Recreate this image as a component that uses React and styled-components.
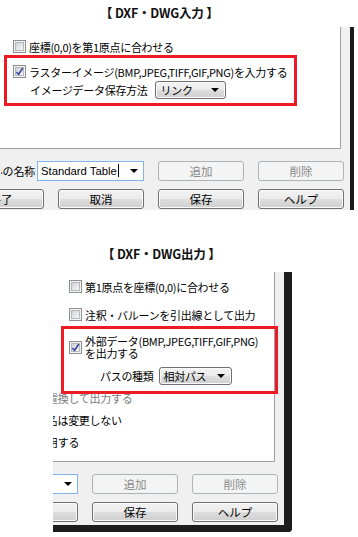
import React from "react";
import styled, { createGlobalStyle, css } from "styled-components";

const Global = createGlobalStyle`
  html, body { margin: 0; padding: 0; background: #ffffff; }
  body {
    font-family: "Noto Sans CJK JP", "Noto Sans", sans-serif;
    font-size: 11px;
    color: #000;
  }
  * { box-sizing: border-box; }
`;

const Page = styled.div`
  width: 358px;
  height: 537px;
  overflow: hidden;
  background: #fff;
  display: flex;
  flex-direction: column;
`;

const Title = styled.div`
  height: ${(p) => p.$h}px;
  padding-left: ${(p) => p.$x}px;
  padding-top: ${(p) => p.$top}px;
  font-weight: 700;
  font-size: 12.5px;
  line-height: 12px;
  letter-spacing: -0.2px;
  color: #111;
  white-space: nowrap;
  flex-shrink: 0;
`;

const Crop = styled.div`
  margin-left: ${(p) => p.$left}px;
  width: ${(p) => p.$w}px;
  overflow: hidden;
  flex-shrink: 0;
`;

const Window = styled.div`
  display: flex;
  background: #f0f0f0;
  border-right: ${(p) => p.$frame}px solid #1c1c1c;
  border-bottom: ${(p) => p.$bottom}px solid #1c1c1c;
  border-bottom-right-radius: ${(p) => (p.$bottom ? 4 : 0)}px;
`;

const Dialog = styled.div`
  flex: 1;
  min-width: 0;
  display: flex;
  flex-direction: column;
`;

const ListPanel = styled.div`
  height: ${(p) => p.$h}px;
  margin-right: 9px;
  background: #fff;
  border-right: 1px solid #a0a0a0;
  border-bottom: 1px solid #a0a0a0;
  padding-left: ${(p) => p.$pad}px;
  padding-top: ${(p) => p.$top}px;
  display: flex;
  flex-direction: column;
  align-items: flex-start;
`;

const CheckRow = styled.div`
  display: flex;
  align-items: center;
  gap: 3px;
  margin-left: ${(p) => p.$ml || 0}px;
  margin-top: ${(p) => p.$mt || 0}px;
  white-space: nowrap;
  letter-spacing: -0.3px;
`;

const Label = styled.span`
  line-height: 12px;
  white-space: nowrap;
`;

const BoxOuter = styled.span`
  width: 13px;
  height: 13px;
  flex-shrink: 0;
  border: 1px solid #8e8f8f;
  background: #f4f4f4;
  padding: 1px;
  display: flex;
`;

const BoxInner = styled.span`
  flex: 1;
  border: 1px solid #b4b8bd;
  background: linear-gradient(135deg, #cfd2d6 0%, #e6e7e9 55%, #f7f7f7 100%);
  position: relative;
  display: flex;
  align-items: center;
  justify-content: center;
`;

const Check = ({ on }) => (
  <BoxOuter>
    <BoxInner>
      {on && (
        <svg width="9" height="9" viewBox="0 0 9 9" style={{ position: "absolute", left: -1, top: -1 }}>
          <path d="M1.5 5 L3.5 7.5 L7.8 1" fill="none" stroke="#3a4a9c" strokeWidth="1.6" strokeLinejoin="round" />
        </svg>
      )}
    </BoxInner>
  </BoxOuter>
);

const RedBox = styled.div`
  border: 3px solid #ed1c24;
  width: ${(p) => p.$w}px;
  height: ${(p) => p.$h}px;
  margin-top: ${(p) => p.$mt}px;
  padding: ${(p) => p.$pad};
  display: flex;
  flex-direction: column;
  align-items: flex-start;
  flex-shrink: 0;
`;

const SubRow = styled.div`
  display: flex;
  align-items: center;
  gap: ${(p) => p.$gap}px;
  margin-left: ${(p) => p.$ml}px;
  margin-top: ${(p) => p.$mt}px;
  letter-spacing: -0.3px;
  white-space: nowrap;
`;

const Triangle = styled.span`
  width: 0;
  height: 0;
  border-left: 4px solid transparent;
  border-right: 4px solid transparent;
  border-top: 4px solid #000;
  flex-shrink: 0;
`;

const Select = styled.div`
  width: ${(p) => p.$w}px;
  height: 18px;
  border: 1px solid #707070;
  border-radius: 3px;
  background: linear-gradient(#f3f3f3 0%, #ebebeb 50%, #dddddd 51%, #d0d0d0 100%);
  box-shadow: inset 0 0 0 1px #fafafa;
  display: flex;
  align-items: center;
  justify-content: space-between;
  padding: 0 6px 0 4px;
  line-height: 12px;
`;

const Controls = styled.div`
  display: flex;
  flex-direction: column;
  gap: 8px;
  padding: 12px 6px ${(p) => p.$pb}px 0;
  overflow: hidden;
`;

const Row = styled.div`
  display: flex;
  justify-content: flex-end;
  align-items: center;
  gap: 14px;
  height: 20px;
`;

const Group = styled.div`
  display: flex;
  align-items: center;
  gap: 2px;
  flex-shrink: 0;
`;

const FieldLabel = styled.span`
  width: ${(p) => p.$w}px;
  display: flex;
  justify-content: flex-end;
  overflow: hidden;
  white-space: nowrap;
  letter-spacing: -0.2px;
  line-height: 12px;
`;

const Combo = styled.div`
  width: 107px;
  height: 20px;
  flex-shrink: 0;
  background: #fff;
  border: 1px solid #7eb4ea;
  display: flex;
  align-items: center;
  justify-content: space-between;
  padding: 0 5px 0 3px;
`;

const ComboText = styled.span`
  font-family: "Liberation Sans", Arial, sans-serif;
  font-size: 11.3px;
  line-height: 14px;
  white-space: nowrap;
  &::after {
    content: "";
    display: inline-block;
    width: 1px;
    height: 13px;
    background: #000;
    vertical-align: -2px;
    margin-left: 1px;
  }
`;

const Button = styled.div`
  width: 86px;
  height: 20px;
  flex-shrink: 0;
  border-radius: 3px;
  display: flex;
  align-items: center;
  justify-content: center;
  font-size: 11.5px;
  line-height: 12px;
  ${(p) =>
    p.$disabled
      ? css`
          border: 1px solid #adb2b5;
          background: #f4f4f4;
          color: #8a8a8a;
        `
      : css`
          border: 1px solid #707070;
          background: linear-gradient(#f2f2f2 0%, #ebebeb 50%, #dddddd 51%, #cfcfcf 100%);
          box-shadow: inset 0 0 0 1px #fbfbfb;
          color: #000;
        `}
`;

const ListLine = styled.div`
  height: 22px;
  line-height: 22px;
  margin-left: ${(p) => p.$ml}px;
  margin-top: ${(p) => p.$mt || 0}px;
  white-space: nowrap;
  letter-spacing: -0.3px;
  color: ${(p) => (p.$dim ? "#7a7a7a" : "#000")};
`;

export default function App() {
  return (
    <>
      <Global />
      <Page>
        <Title $h={27} $x={100} $top={7}>【 DXF・DWG入力 】</Title>
        <Crop $left={0} $w={354}>
          <Window $frame={4} $bottom={0}>
            <Dialog>
              <ListPanel $h={122} $pad={4} $top={13}>
                <CheckRow $ml={9}>
                  <Check />
                  <Label>座標(0,0)を第1原点に合わせる</Label>
                </CheckRow>
                <RedBox $w={293} $h={51} $mt={2} $pad="7px 0 0 6px">
                  <CheckRow>
                    <Check on />
                    <Label>ラスターイメージ(BMP,JPEG,TIFF,GIF,PNG)を入力する</Label>
                  </CheckRow>
                  <SubRow $ml={17} $mt={3} $gap={8}>
                    <Label>イメージデータ保存方法</Label>
                    <Select $w={71}>
                      <Label>リンク</Label>
                      <Triangle />
                    </Select>
                  </SubRow>
                </RedBox>
              </ListPanel>
              <Controls $pb={1}>
                <Row>
                  <Group>
                    <FieldLabel $w={34}>テーブルの名称</FieldLabel>
                    <Combo>
                      <ComboText>Standard Table</ComboText>
                      <Triangle />
                    </Combo>
                  </Group>
                  <Button $disabled>追加</Button>
                  <Button $disabled>削除</Button>
                </Row>
                <Row>
                  <Button>終了</Button>
                  <Button>取消</Button>
                  <Button>保存</Button>
                  <Button>ヘルプ</Button>
                </Row>
              </Controls>
            </Dialog>
          </Window>
        </Crop>
        <Title $h={62} $x={102} $top={38}>【 DXF・DWG出力 】</Title>
        <Crop $left={53} $w={239}>
          <Window $frame={8} $bottom={7}>
            <Dialog>
              <ListPanel $h={190} $pad={8} $top={8}>
                <CheckRow $ml={8}>
                  <Check />
                  <Label>第1原点を座標(0,0)に合わせる</Label>
                </CheckRow>
                <CheckRow $ml={8} $mt={15}>
                  <Check />
                  <Label>注釈・バルーンを引出線として出力</Label>
                </CheckRow>
                <RedBox $w={217} $h={68} $mt={5} $pad="6px 0 0 5px">
                  <CheckRow>
                    <Check on />
                    <Label>
                      外部データ(BMP,JPEG,TIFF,GIF,PNG)
                      <br />
                      を出力する
                    </Label>
                  </CheckRow>
                  <SubRow $ml={31} $mt={8} $gap={5}>
                    <Label>パスの種類</Label>
                    <Select $w={73}>
                      <Label>相対パス</Label>
                      <Triangle />
                    </Select>
                  </SubRow>
                </RedBox>
                <ListLine $ml={-46} $mt={-7} $dim>文字を置換して出力する</ListLine>
                <ListLine $ml={-46}>レイヤ名は変更しない</ListLine>
                <ListLine $ml={-46}>色を使用する</ListLine>
              </ListPanel>
              <Controls $pb={3}>
                <Row>
                  <Combo>
                    <ComboText>Standard Table</ComboText>
                    <Triangle />
                  </Combo>
                  <Button $disabled>追加</Button>
                  <Button $disabled>削除</Button>
                </Row>
                <Row>
                  <Button>取消</Button>
                  <Button>保存</Button>
                  <Button>ヘルプ</Button>
                </Row>
              </Controls>
            </Dialog>
          </Window>
        </Crop>
      </Page>
    </>
  );
}
